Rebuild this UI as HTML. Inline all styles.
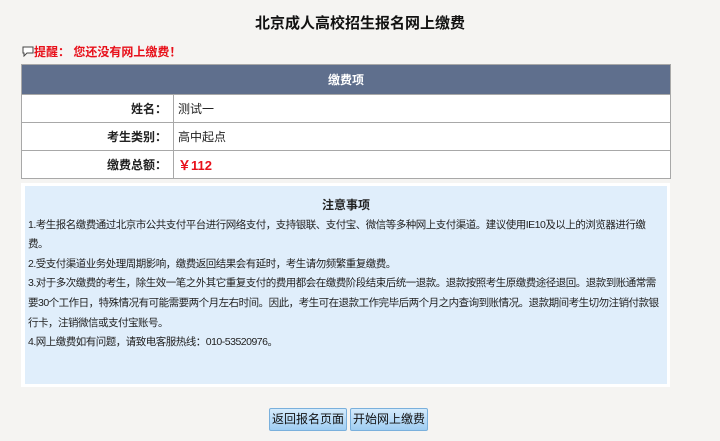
<!DOCTYPE html>
<html><head><meta charset="utf-8"><style>
*{margin:0;padding:0;box-sizing:border-box}
body{width:720px;height:441px;background:#f5f4f2;font-family:"Liberation Sans","Noto Sans CJK SC",sans-serif;font-size:12px;color:#222;position:relative;overflow:hidden}
.title{position:absolute;top:12px;left:0;width:720px;text-align:center;font-size:15px;font-weight:bold;color:#111}
.tip{position:absolute;top:45px;left:22px;color:#e8101a;font-weight:bold;font-size:12px;line-height:14px}
table{position:absolute;left:21px;top:64px;width:650px;border-collapse:collapse;background:#fff}
td{border:1px solid #a8a8a8;height:28px;font-size:12px}
th{background:#5f6f8d;color:#fff;height:30px;font-size:12px;border:1px solid #a8a8a8}
td.l{width:152px;text-align:right;padding-right:6px;font-weight:bold}
td.v{padding-left:4px}
.box{position:absolute;left:21px;top:183px;width:649px;height:204px;background:#fff;padding:3px 3px 3px 4px}
.in{background:#e0eefb;width:100%;height:100%;padding:10px 3px 0 3px;line-height:19.6px;font-size:10.5px;letter-spacing:-0.5px;color:#222;white-space:nowrap;overflow:hidden}
.in h4{text-align:center;font-size:12px;margin-bottom:0;letter-spacing:0}
.btn{position:absolute;top:408px;height:23px;font-size:12px;line-height:21px;text-align:center;border:1px solid #7ab0dc;border-radius:2px;background:linear-gradient(#d4ebfc,#9fcdf2);color:#111}
</style></head><body>
<div class="title">北京成人高校招生报名网上缴费</div>
<div class="tip"><svg width="12" height="11" viewBox="0 0 12 11" style="vertical-align:-1px"><path d="M1 1h10v6H5l-3 3V7H1z" fill="#fff" stroke="#444"/></svg>提醒： 您还没有网上缴费！</div>
<table>
<tr><th colspan="2">缴费项</th></tr>
<tr><td class="l">姓名：</td><td class="v">测试一</td></tr>
<tr><td class="l">考生类别：</td><td class="v">高中起点</td></tr>
<tr><td class="l">缴费总额：</td><td class="v" style="color:#e8101a;font-weight:bold;font-size:13px">￥112</td></tr>
</table>
<div class="box"><div class="in">
<h4>注意事项</h4>
1.考生报名缴费通过北京市公共支付平台进行网络支付，支持银联、支付宝、微信等多种网上支付渠道。建议使用IE10及以上的浏览器进行缴<br>费。<br>
2.受支付渠道业务处理周期影响，缴费返回结果会有延时，考生请勿频繁重复缴费。<br>
3.对于多次缴费的考生，除生效一笔之外其它重复支付的费用都会在缴费阶段结束后统一退款。退款按照考生原缴费途径退回。退款到账通常需<br>要30个工作日，特殊情况有可能需要两个月左右时间。因此，考生可在退款工作完毕后两个月之内查询到账情况。退款期间考生切勿注销付款银<br>行卡，注销微信或支付宝账号。<br>
4.网上缴费如有问题，请致电客服热线：010-53520976。
</div></div>
<div class="btn" style="left:269px;width:78px">返回报名页面</div>
<div class="btn" style="left:350px;width:78px">开始网上缴费</div>
</body></html>
